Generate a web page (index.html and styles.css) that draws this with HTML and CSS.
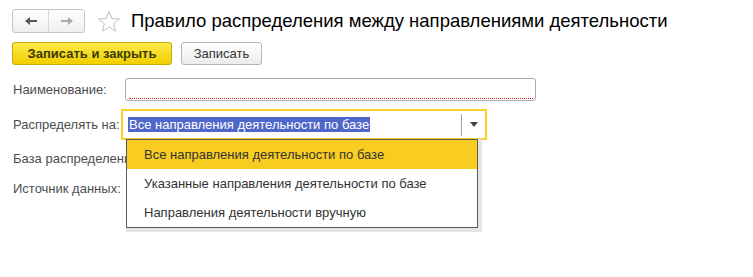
FILE: index.html
```html
<!DOCTYPE html>
<html lang="ru">
<head>
  <meta charset="UTF-8" />
  <title>Правило распределения</title>
  <link rel="stylesheet" href="styles.css">
</head>
<body>
  <div class="form">
    <!-- Header with navigation and title -->
    <div class="header">
      <div class="nav">
        <span class="nav-btn">
          <svg width="14" height="10" viewBox="0 0 14 10"><path d="M1 5 L6 1 L6 4 L13 4 L13 6 L6 6 L6 9 Z" fill="#555"/></svg>
        </span>
        <span class="nav-btn">
          <svg width="14" height="10" viewBox="0 0 14 10"><path d="M13 5 L8 1 L8 4 L1 4 L1 6 L8 6 L8 9 Z" fill="#aaa"/></svg>
        </span>
      </div>
      <svg class="star" width="24" height="23" viewBox="0 0 24 23"><path d="M12 1.5 L14.9 8.6 L22.5 8.9 L16.6 13.7 L18.6 21.2 L12 17 L5.4 21.2 L7.4 13.7 L1.5 8.9 L9.1 8.6 Z" fill="none" stroke="#c0c0c0" stroke-width="1"/></svg>
      <h1>Правило распределения между направлениями деятельности</h1>
    </div>

    <!-- Command bar -->
    <div class="toolbar">
      <button class="btn btn-primary">Записать и закрыть</button>
      <button class="btn btn-plain">Записать</button>
    </div>

    <!-- Fields -->
    <div class="row row-name">
      <span class="label">Наименование:</span>
      <div class="input"><span class="required"></span></div>
    </div>
    <div class="row row-select">
      <span class="label">Распределять на:</span>
      <div class="select-wrap">
        <div class="select">
          <span class="selected">Все направления деятельности по базе</span>
          <span class="select-btn">
            <svg width="8" height="5" viewBox="0 0 8 5"><path d="M0 0 L8 0 L4 5 Z" fill="#444"/></svg>
          </span>
        </div>
        <ul class="dropdown">
          <li class="active">Все направления деятельности по базе</li>
          <li>Указанные направления деятельности по базе</li>
          <li>Направления деятельности вручную</li>
        </ul>
      </div>
    </div>
    <div class="row row-base">
      <span class="label">База распределения:</span>
    </div>
    <div class="row row-source">
      <span class="label">Источник данных:</span>
    </div>
  </div>
</body>
</html>
```

FILE: styles.css
```css
/* Base */
html, body {
  height: 100%;
}
body {
  margin: 0;
  background: #fff;
  font-family: "Liberation Sans", Arial, sans-serif;
  font-size: 13px;
  color: #4d4d4d;
}
.form {
  min-height: 100%;
  box-sizing: border-box;
  padding: 9px 0 0 12px;
}
/* Header */
.header {
  display: flex;
  align-items: center;
  height: 24px;
}
.nav {
  display: flex;
  width: 71px;
  height: 22px;
  border: 1px solid #c6c6c6;
  border-radius: 3px;
  background: linear-gradient(#ffffff, #efefef);
}
.nav-btn {
  flex: 1;
  display: flex;
  align-items: center;
  justify-content: center;
}
.nav-btn + .nav-btn {
  border-left: 1px solid #d8d8d8;
}
.star {
  margin-left: 12px;
}
h1 {
  margin: 0 0 0 10px;
  font-size: 18.5px;
  font-weight: normal;
  color: #000;
}
/* Toolbar */
.toolbar {
  display: flex;
  margin-top: 9px;
}
.btn {
  height: 23px;
  padding: 0;
  font-family: inherit;
  font-size: 13px;
  white-space: nowrap;
  color: #333;
  background: linear-gradient(#ffffff, #ececec);
  border: 1px solid #b5b5b5;
  border-radius: 3px;
  margin-right: 9px;
}
.btn-primary {
  width: 160px;
  font-weight: bold;
  color: #3b3b00;
  background: linear-gradient(#ffe94a, #f2cf00);
  border-color: #c9aa00;
}
.btn-plain {
  width: 81px;
}
/* Rows */
.row {
  display: flex;
  align-items: center;
}
.label {
  width: 112px;
  flex: none;
  white-space: nowrap;
  padding-left: 1px;
}
.row-name {
  margin-top: 13px;
  height: 23px;
}
.input {
  position: relative;
  width: 409px;
  height: 21px;
  border: 1px solid #a9a9a9;
  border-radius: 3px;
}
.required {
  position: absolute;
  left: 3px;
  right: 2px;
  bottom: 1px;
  border-bottom: 1px dotted #e02020;
}
.row-select {
  margin-top: 8px;
  height: 31px;
}
.row-select .label {
  width: 108px;
}
.select-wrap {
  position: relative;
}
.select {
  display: flex;
  align-items: center;
  width: 362px;
  height: 27px;
  border: 2px solid #fbcf2a;
}
.selected {
  margin-left: 5px;
  height: 15px;
  line-height: 15px;
  padding: 0 1px;
  background: #5066c9;
  color: #fff;
  flex: none;
}
.select-btn {
  margin-left: auto;
  width: 23px;
  height: 22px;
  border-left: 1px solid #a0a0a0;
  display: flex;
  align-items: center;
  justify-content: center;
}
/* Dropdown list */
.dropdown {
  position: absolute;
  left: 5px;
  top: 30px;
  width: 350px;
  margin: 0;
  padding: 0;
  list-style: none;
  background: #fff;
  border: 1px solid #5a5a5a;
  box-shadow: 2px 2px 0 2px #e4e4e4;
  z-index: 2;
}
.dropdown li {
  height: 29px;
  line-height: 29px;
  padding-left: 17px;
  color: #333;
}
.dropdown li.active {
  background: #f9cc20;
}
.row-base {
  margin-top: 4px;
  height: 28px;
}
.row-source {
  height: 32px;
}
```
